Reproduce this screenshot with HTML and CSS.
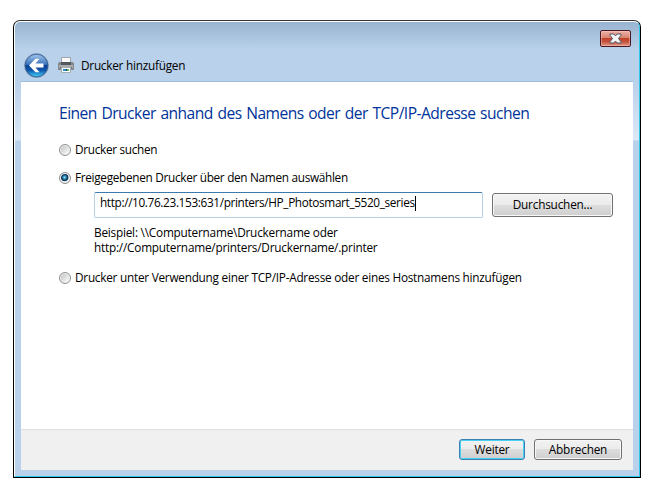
FILE: index.html
```html
<!DOCTYPE html>
<html lang="de">
<head>
<meta charset="utf-8">
<title>Drucker hinzufügen</title>
<link rel="stylesheet" href="styles.css">
</head>
<body>
<div class="window">
  <div class="frame">
    <header class="titlebar">
      <div class="caption">
        <button class="close" aria-label="Schließen">
          <svg width="13" height="11" viewBox="0 0 13 11"><path d="M1 1h3.900l1.600 1.900L8.100 1H12v1.300L9.500 5.500 12 8.700V10H8.100L6.500 8.100 4.900 10H1V8.700l2.500-3.200L1 2.300z" fill="#f4f4f4" stroke="#505565" stroke-width="1"/></svg>
        </button>
      </div>
      <div class="nav">
        <svg class="back" width="26" height="26" viewBox="0 0 26 26">
          <defs>
            <linearGradient id="ball" x1="0" y1="0" x2="0" y2="1"><stop offset="0" stop-color="#a5c6ec"/><stop offset=".45" stop-color="#3c75bd"/><stop offset=".5" stop-color="#0b3f94"/><stop offset=".72" stop-color="#1159ae"/><stop offset="1" stop-color="#43d5fa"/></linearGradient>
            <linearGradient id="rim" x1="0" y1="0" x2="0" y2="1"><stop offset="0" stop-color="#7c93b2"/><stop offset="1" stop-color="#73879f"/></linearGradient>
          </defs>
          <circle cx="12.500" cy="12.500" r="12" fill="#b9cfe8" stroke="url(#rim)" stroke-width=".8"/>
          <circle cx="12.500" cy="12.500" r="11.300" fill="url(#ball)" stroke="#23508f" stroke-width=".8"/>
          <path d="M5 12.500l6.500-6.700h4L11.500 10.500H19.500v4h-8l4 4.700h-4z" fill="#fff"/>
        </svg>
        <svg class="printer" width="16" height="16" viewBox="0 0 16 16">
          <path d="M3.500.500h9V7h-9z" fill="#fafafa" stroke="#a0a4a9"/>
          <path d="M1 5h2v2h10V5h2l1 1.500V13H0V6.500z" fill="#85888c"/>
          <path d="M3 5h10v3H3z" fill="#54575c"/>
          <path d="M1 8h14v3H1z" fill="#a9abae"/>
          <path d="M2 10h12v1H2z" fill="#6c6f73"/>
          <path d="M3.500 10.500h9v5h-9z" fill="#fff" stroke="#a5adb5"/>
          <path d="M5 12h3v2H5z" fill="#2488cf"/><path d="M8 12h1v2H8z" fill="#173b68"/><path d="M9 12h2v2H9z" fill="#69b86b"/>
        </svg>
        <span class="title">Drucker hinzufügen</span>
      </div>
    </header>
    <main class="page">
      <h1>Einen Drucker anhand des Namens oder der TCP/IP-Adresse suchen</h1>
      <div class="option first"><i class="radio"></i><span class="label-search">Drucker suchen</span></div>
      <div class="option second"><i class="radio on"></i><span class="label-shared">Freigegebenen Drucker über den Namen auswählen</span></div>
      <div class="address">
        <div class="field"><span class="url">http://10.76.23.153:631/printers/HP_Photosmart_5520_series</span><i class="caret"></i></div>
        <button class="btn browse"><span>Durchsuchen...</span></button>
      </div>
      <div class="hint">
        <div>Beispiel: \\Computername\Druckername oder</div>
        <div>http://Computername/printers/Druckername/.printer</div>
      </div>
      <div class="option third"><i class="radio"></i><span>Drucker unter Verwendung einer TCP/IP-Adresse oder eines Hostnamens hinzufügen</span></div>
    </main>
    <footer class="footer">
      <button class="btn next"><span>Weiter</span></button>
      <button class="btn cancel"><span>Abbrechen</span></button>
    </footer>
  </div>
</div>
</body>
</html>
```
FILE: styles.css
```css
* { box-sizing: border-box; }
body {
  margin: 0;
  padding: 20px 13px 14px;
  height: 492px;
  background: #fff;
  color: #000;
  font: 11.8px/15px "Open Sans", "Noto Sans", sans-serif;
  letter-spacing: -.25px;
  white-space: nowrap;
}
.window {
  width: 628px;
  height: 458px;
  border: 1px solid #000;
  border-top-color: #333;
  border-radius: 7px 7px 0 0;
  background: #b9d1ea;
  overflow: hidden;
}
.frame {
  height: 456px;
  display: flex;
  flex-direction: column;
  border: 1px solid #fff;
  border-right-color: #2cc9ea;
  border-bottom-color: #2cc9ea;
  border-radius: 6px 6px 0 0;
  padding: 0 6px 6px;
  background:
    linear-gradient(#99b4d1, #b9d1ea 27px, #b9d1ea 60px, transparent 60px),
    linear-gradient(#b9d1ea 60px, #dbe8f6 118px, #b9d1ea 119px);
}
.titlebar {
  height: 60px;
  flex: none;
  border-bottom: 1px solid #a0bdd8;
}
.caption { height: 28px; padding: 8px 2px 0; display: flex; justify-content: flex-end; }
.close {
  width: 31px;
  height: 17px;
  padding: 0;
  border: 1px solid #471722;
  border-radius: 2px;
  display: flex;
  align-items: center;
  justify-content: center;
  background: linear-gradient(#eab0a6, #d8836f 46%, #c0412a 50%, #c5513b 70%, #e09787);
  box-shadow: inset 0 0 0 1px rgba(255, 205, 195, .45);
}
.nav { height: 30px; display: flex; align-items: center; padding-left: 3px; }
.back { margin-top: 1px; }
.printer { margin: 0 0 0 8px; }
.title { margin: 1px 0 0 7px; }
.page { flex: 1; background: #fff; padding: 20px 20px 0 38px; }
h1 {
  margin: 0;
  height: 21px;
  font-size: 15.6px;
  line-height: 22px;
  font-weight: 400;
  letter-spacing: -.53px;
  word-spacing: 1.1px;
  color: #039;
}
.option { height: 15px; display: flex; align-items: center; gap: 4px; }
.option span { margin-top: 1px; }
.first { margin-top: 18px; }
.second { margin-top: 13px; }
.third { margin-top: 14px; }
.label-search, .label-shared { letter-spacing: -.31px; }
.radio {
  width: 12px;
  height: 12px;
  margin-top: 2px;
  border: 1px solid #8e8f8f;
  border-radius: 50%;
  background: linear-gradient(135deg, #b9bcc0, #f5f5f5 80%);
  box-shadow: inset 0 0 0 1px #f4f4f4;
}
.on { background: radial-gradient(circle at 46% 44%, #9de4fa 0, #2f91bd 1.500px, #0d3554 3px, #173f5e 3.500px, #e2e8ec 4.200px); }
.address { margin: 8px 0 0 35px; display: flex; gap: 9px; }
.field {
  width: 389px;
  height: 26px;
  padding: 2px 5px;
  border: 1px solid #b5cfe7;
  border-top-color: #3d7bad;
  border-radius: 2px;
  display: flex;
  align-items: flex-start;
}
.url { letter-spacing: -.36px; }
.caret { width: 1px; height: 15px; margin-top: 1px; background: #000; }
.hint { margin: 7px 0 0 35px; height: 30px; letter-spacing: -.22px; }
.footer {
  height: 41px;
  flex: none;
  display: flex;
  justify-content: flex-end;
  gap: 9px;
  padding: 9px 11px 0 0;
  border-top: 1px solid #dfdfdf;
  background: #f0f0f0;
}
.btn {
  padding: 0;
  border: 1px solid #707070;
  border-radius: 3px;
  background: linear-gradient(#f2f2f2, #ebebeb 49%, #ddd 50%, #cfcfcf);
  box-shadow: inset 0 0 0 1px #f8f8f8;
  font: inherit;
  letter-spacing: -.2px;
  color: #000;
}
.browse { width: 121px; height: 24px; margin-top: 1px; padding-bottom: 1px; }
.next { width: 66px; height: 21px; border-color: #3c7fb1; box-shadow: inset 0 0 0 1px #48d0f5; }
.cancel { width: 88px; height: 21px; }
```
